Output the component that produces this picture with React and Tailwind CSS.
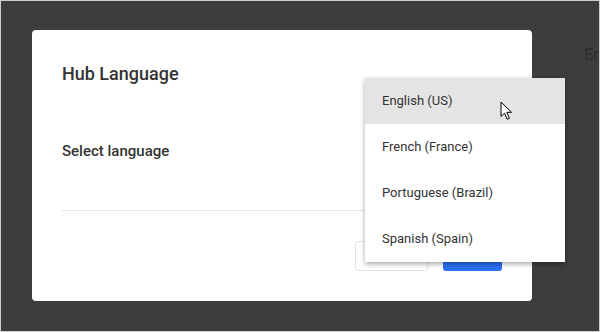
import React from 'react';

const languages = ['English (US)', 'French (France)', 'Portuguese (Brazil)', 'Spanish (Spain)'];

function Cursor() {
    return (
        <svg width="13" height="20" viewBox="0 0 13 20" className="absolute left-[499px] top-[100px]">
            <path
                d="M1 1 L1 15.5 L4.5 12.2 L7.2 18.3 L9.4 17.3 L6.8 11.3 L11.5 11.3 Z"
                fill="#ffffff"
                stroke="#000000"
                strokeWidth="1"
                strokeLinejoin="round"
            />
        </svg>
    );
}

export default function App() {
    return (
        <div
            className="relative w-[600px] h-[332px] overflow-hidden border border-[#cdcdcd] bg-[#3d3d3d] pl-[31px] pt-[29px]"
            style={{ fontFamily: 'Roboto, "Liberation Sans", sans-serif' }}
        >
            <span className="absolute left-[583px] top-[42px] text-[16px] font-medium text-[#303030]">En</span>

            <div className="w-[500px] h-[271px] bg-white rounded-[4px] px-[30px] pt-[33px] pb-[30px] flex flex-col">
                <h2 className="text-[18px] leading-[22px] font-medium text-[#333333]">Hub Language</h2>
                <p className="mt-[56px] text-[15px] leading-[20px] font-medium text-[#333333]">Select language</p>
                <div className="mt-[49px] h-px bg-[#e6e6e6]" />
                <div className="mt-[30px] flex justify-end gap-[15px]">
                    <button className="w-[73px] h-[30px] rounded-[3px] border border-[#e3e3e3] bg-white text-[13px] text-[#333333]">
                        Cancel
                    </button>
                    <button className="w-[59px] h-[30px] rounded-[3px] bg-[#2a6ef2] text-[13px] text-white font-medium">
                        OK
                    </button>
                </div>
            </div>

            <ul className="absolute left-[364px] top-[77px] w-[200px] bg-white shadow-[0_2px_5px_rgba(0,0,0,0.35)]">
                {languages.map((lang, i) => (
                    <li
                        key={lang}
                        className={`h-[46px] flex items-center pl-[17px] text-[13px] text-[#333333] ${i === 0 ? 'bg-[#e4e4e4]' : ''}`}
                    >
                        {lang}
                    </li>
                ))}
            </ul>

            <Cursor />
        </div>
    );
}
